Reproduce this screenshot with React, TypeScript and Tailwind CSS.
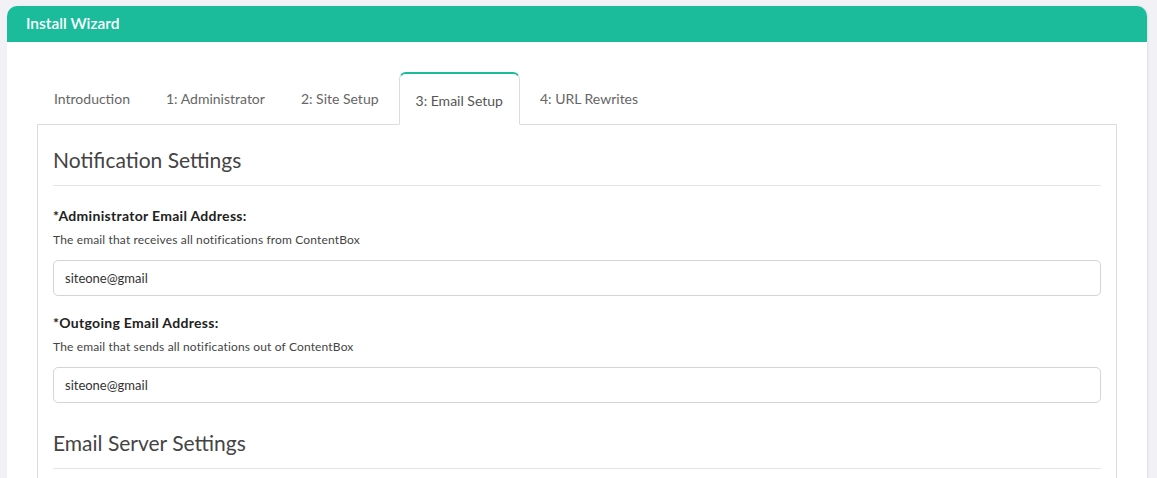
import { useState } from "react";

const tabs = [
  "Introduction",
  "1: Administrator",
  "2: Site Setup",
  "3: Email Setup",
  "4: URL Rewrites",
];

const Field = ({
  label,
  help,
  value,
}: {
  label: string;
  help: string;
  value: string;
}) => {
  return (
    <div className="mb-[17px]">
      <label className="block text-[14px] font-bold text-[#222] leading-[20px] tracking-[0.3px]">
        {label}
      </label>
      <p className="mt-[5px] text-[12px] text-[#444] leading-[18px] tracking-[0.15px]">{help}</p>
      <input
        className="mt-[11px] block w-full h-[36px] rounded-[5px] border border-[#d4d4dc] px-[11px] text-[13px] text-[#333] outline-none"
        defaultValue={value}
      />
    </div>
  );
};

const App = () => {
  const [active, setActive] = useState(3);
  return (
    <div
      className="min-h-[478px] bg-[#f1f1f6] pt-[6px] pl-[7px] pr-[10px]"
      style={{ fontFamily: "Lato, 'Noto Sans', sans-serif" }}
    >
      <div className="bg-white rounded-t-[10px] shadow-[1px_0_2px_rgba(0,0,0,0.08)] overflow-hidden">
        <div className="h-[36px] bg-[#1abc9c] flex items-center px-[19px]">
          <h1 className="text-white text-[15.5px] font-semibold">Install Wizard</h1>
        </div>
        <div className="px-[30px] pt-[30px] pb-[20px]">
          <ul className="flex gap-[4px] pl-[1px] border-b border-[#dcdcdc]">
            {tabs.map((tab, index) => (
              <li key={tab} className="-mb-px">
                <button
                  onClick={() => setActive(index)}
                  className={
                    index === active
                      ? "h-[53px] px-[16px] pt-[2px] text-[14px] text-[#555] bg-white border border-[#dcdcdc] border-b-white border-t-2 border-t-[#1abc9c] rounded-t-[7px]"
                      : "h-[53px] px-[15px] text-[14px] text-[#666] border border-transparent"
                  }
                >
                  {tab}
                </button>
              </li>
            ))}
          </ul>
          <div className="border border-t-0 border-[#dcdcdc] px-[15px] pt-[21px]">
            <h2 className="text-[21px] text-[#444] leading-[28px] pb-[11px] border-b border-[#e4e4e4]">
              Notification Settings
            </h2>
            <div className="pt-[20px]">
              <Field
                label="*Administrator Email Address:"
                help="The email that receives all notifications from ContentBox"
                value="siteone@gmail"
              />
              <Field
                label="*Outgoing Email Address:"
                help="The email that sends all notifications out of ContentBox"
                value="siteone@gmail"
              />
            </div>
            <h2 className="mt-[26px] text-[21px] text-[#444] leading-[28px] pb-[11px] border-b border-[#e4e4e4]">
              Email Server Settings
            </h2>
            <div className="h-[40px]" />
          </div>
        </div>
      </div>
    </div>
  );
};

export default App;
